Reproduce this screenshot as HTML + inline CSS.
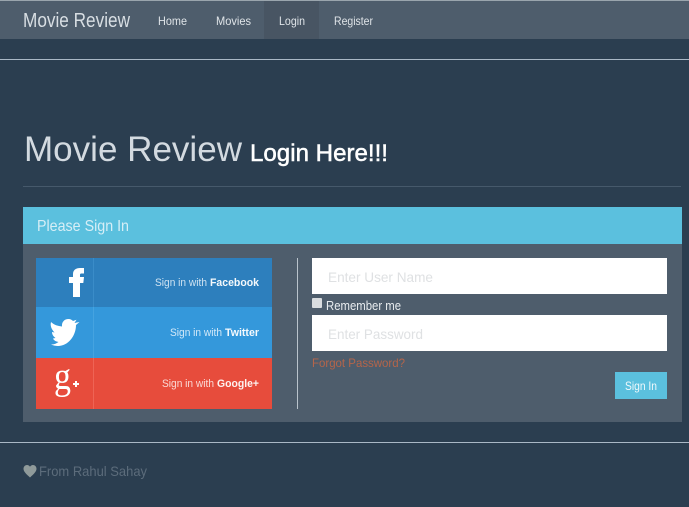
<!DOCTYPE html>
<html lang="en">
<head>
<meta charset="utf-8">
<title>Movie Review</title>
<style>
html,body{margin:0;padding:0;width:689px;height:507px;overflow:hidden;background:#2b3e50;font-family:"Liberation Sans",sans-serif}
.b{position:absolute}
svg.o{position:absolute;left:0;top:0}
svg.o text{font-family:"Liberation Sans",sans-serif}
</style>
</head>
<body>
<div class="b" style="left:0;top:0;width:689px;height:1px;background:#9aa5ad"></div>
<div class="b" style="left:0;top:1px;width:689px;height:38px;background:#4e5d6c"></div>
<div class="b" style="left:264px;top:1px;width:55px;height:38px;background:#485563"></div>
<div class="b" style="left:0;top:59px;width:689px;height:1px;background:#aab8c6"></div>
<div class="b" style="left:23px;top:186px;width:658px;height:1px;background:#46596b"></div>

<div class="b" style="left:23px;top:207px;width:659px;height:37px;background:#5bc0de"></div>
<div class="b" style="left:23px;top:244px;width:659px;height:178px;background:#4e5d6c"></div>

<div class="b" style="left:36px;top:258px;width:236px;height:49px;background:#2d7fbd"></div>
<div class="b" style="left:36px;top:307px;width:236px;height:51px;background:#3498db"></div>
<div class="b" style="left:36px;top:358px;width:236px;height:51px;background:#e74c3c"></div>
<div class="b" style="left:93px;top:258px;width:1px;height:49px;background:#3a8cc8"></div>
<div class="b" style="left:93px;top:307px;width:1px;height:51px;background:#45a3e0"></div>
<div class="b" style="left:93px;top:358px;width:1px;height:51px;background:#ee6455"></div>

<div class="b" style="left:297px;top:258px;width:1px;height:151px;background:#b9c3cc"></div>
<div class="b" style="left:312px;top:258px;width:355px;height:36px;background:#fff"></div>
<div class="b" style="left:312px;top:315px;width:355px;height:36px;background:#fff"></div>
<div class="b" style="left:312px;top:298px;width:10px;height:10px;background:#d9dcdf;border-radius:1px"></div>
<div class="b" style="left:615px;top:372px;width:52px;height:27px;background:#5bc0de"></div>
<div class="b" style="left:0;top:442px;width:689px;height:1px;background:#aab8c6"></div>

<svg class="o" width="689" height="507" viewBox="0 0 689 507" xmlns="http://www.w3.org/2000/svg">
<text x="23" y="27" font-size="20" fill="#d8dee3" textLength="107" lengthAdjust="spacingAndGlyphs">Movie Review</text>
<text x="158" y="25" font-size="12" fill="#dfe4e8" textLength="29" lengthAdjust="spacingAndGlyphs">Home</text>
<text x="216" y="25" font-size="12" fill="#dfe4e8" textLength="35" lengthAdjust="spacingAndGlyphs">Movies</text>
<text x="279" y="25" font-size="12" fill="#dfe4e8" textLength="26" lengthAdjust="spacingAndGlyphs">Login</text>
<text x="334" y="25" font-size="12" fill="#dfe4e8" textLength="39" lengthAdjust="spacingAndGlyphs">Register</text>

<text x="24" y="161" font-size="35" fill="#d3dae0" textLength="218" lengthAdjust="spacingAndGlyphs">Movie Review</text>
<text x="250" y="161" font-size="24" fill="#ffffff" stroke="#ffffff" stroke-width=".5" textLength="138" lengthAdjust="spacingAndGlyphs">Login Here!!!</text>
<text x="37" y="231" font-size="16" fill="#d6eef6" textLength="92" lengthAdjust="spacingAndGlyphs">Please Sign In</text>

<text x="155" y="286" font-size="11" fill="#cfe3f2" textLength="52" lengthAdjust="spacingAndGlyphs">Sign in with</text>
<text x="210" y="286" font-size="11" font-weight="bold" fill="#f4f8fb" textLength="49" lengthAdjust="spacingAndGlyphs">Facebook</text>
<text x="170" y="336" font-size="11" fill="#d3e9f8" textLength="52" lengthAdjust="spacingAndGlyphs">Sign in with</text>
<text x="225" y="336" font-size="11" font-weight="bold" fill="#f4f9fd" textLength="34" lengthAdjust="spacingAndGlyphs">Twitter</text>
<text x="162" y="387" font-size="11" fill="#fad9d5" textLength="52" lengthAdjust="spacingAndGlyphs">Sign in with</text>
<text x="217" y="387" font-size="11" font-weight="bold" fill="#fdf2f0" textLength="42" lengthAdjust="spacingAndGlyphs">Google+</text>

<path d="M73 297V283H69V277H73V274C73 270 76 268 80 268H84V273.500H81.500C80 273.500 80 274.500 80 275.500V277H84L83.300 283H80V297Z" fill="#fff"/>
<path d="M51 322C54 325 58 326 62 326.500C61.500 322 64.500 319 68.500 319C70.500 319 72 320 73 321L76.500 319.800L74.500 323L79.500 322L76 325C76 336 68 346 58 346C56 346 53 345.500 51 344.500C54 344.500 56.500 343.500 58.500 342C56 341.500 54 340.500 53 338.500L55.500 338C53.500 336.500 52 334.500 52 332L54.500 332.500C51.500 329 50 326 51 322Z" fill="#fff"/>
<text x="54" y="389" font-size="38" fill="#fff" style="font-family:'Liberation Serif',serif" textLength="17" lengthAdjust="spacingAndGlyphs">g</text>
<path d="M75 381H77V383H79V385H77V387H75V385H73V383H75Z" fill="#fff"/>

<text x="328" y="282" font-size="14" fill="#dfe1e3" textLength="105" lengthAdjust="spacingAndGlyphs">Enter User Name</text>
<text x="328" y="339" font-size="14" fill="#dfe1e3" textLength="95" lengthAdjust="spacingAndGlyphs">Enter Password</text>
<text x="326" y="310" font-size="13" fill="#e8ecef" textLength="75" lengthAdjust="spacingAndGlyphs">Remember me</text>
<text x="312" y="367" font-size="12" fill="#b5654a" textLength="93" lengthAdjust="spacingAndGlyphs">Forgot Password?</text>
<text x="625" y="390" font-size="12" fill="#f0f9fc" textLength="32" lengthAdjust="spacingAndGlyphs">Sign In</text>

<path d="M30 477.500C26 474 23.500 471.500 23.500 468.800C23.500 466.500 25.200 465 27 465C28.300 465 29.400 465.600 30 466.800C30.600 465.600 31.700 465 33 465C34.800 465 36.500 466.500 36.500 468.800C36.500 471.500 34 474 30 477.500Z" fill="#8f9a9a"/>
<text x="39" y="476" font-size="14" fill="#5c6c7b" textLength="108" lengthAdjust="spacingAndGlyphs">From Rahul Sahay</text>
</svg>
</body>
</html>
